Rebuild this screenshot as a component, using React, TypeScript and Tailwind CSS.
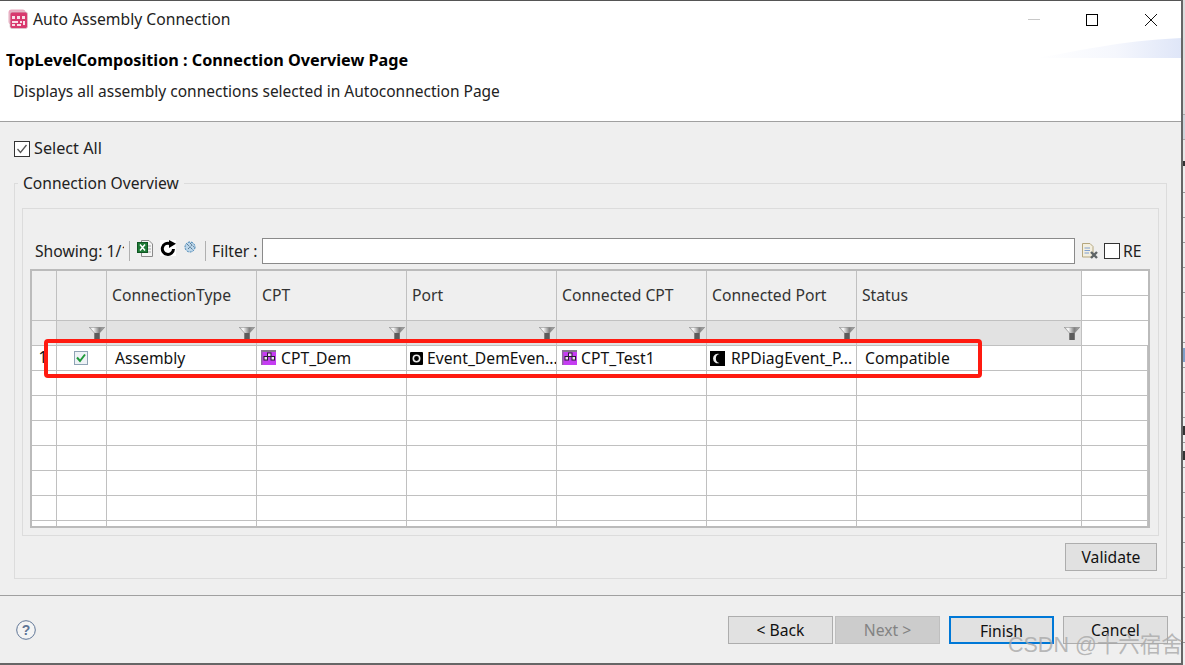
const columns = ["ConnectionType", "CPT", "Port", "Connected CPT", "Connected Port", "Status"];
const gridCols = "grid grid-cols-[25px_50px_150px_150px_150px_150px_150px_225px_1fr]";
const font = { fontFamily: "'Noto Sans', sans-serif" };

function Funnel() {
  return (
    <svg width="16" height="13" viewBox="0 0 16 13" className="absolute right-[1px] bottom-[5px]">
      <defs>
        <linearGradient id="fn" x1="0" x2="1" y1="0" y2="0">
          <stop offset="0" stopColor="#d0d0d0" />
          <stop offset="0.25" stopColor="#fafafa" />
          <stop offset="0.65" stopColor="#808080" />
          <stop offset="1" stopColor="#b0b0b0" />
        </linearGradient>
      </defs>
      <path d="M0.3 0.3H15.7L10.5 6V12.7H5.5V6Z" fill="url(#fn)" stroke="#7a7a7a" strokeWidth="0.6" />
      <path d="M5.5 6H10.5V13H5.5Z" fill="#5c5c5c" />
    </svg>
  );
}

function CptIcon() {
  return (
    <svg width="15" height="15" viewBox="0 0 15 15" className="shrink-0 -mt-[1px]">
      <rect width="15" height="15" fill="#c53df2" />
      <path d="M0 0H15V2H0Z" fill="#86788d" />
      <path d="M0 0H1.5V15H0Z" fill="#8f6aa0" />
      <rect x="6.5" y="3" width="3.5" height="3.5" fill="#f0e0f5" stroke="#2b1a33" strokeWidth="1" />
      <rect x="3" y="6.5" width="3.5" height="3.5" fill="#f0e0f5" stroke="#2b1a33" strokeWidth="1" />
      <rect x="10" y="6.5" width="3.5" height="3.5" fill="#f0e0f5" stroke="#2b1a33" strokeWidth="1" />
    </svg>
  );
}

function PortIcon() {
  return (
    <svg width="13" height="13" viewBox="0 0 13 13" className="shrink-0">
      <rect width="13" height="13" fill="#000" rx="1" />
      <circle cx="6.5" cy="6.5" r="3.2" fill="none" stroke="#e8e8e8" strokeWidth="1.6" />
    </svg>
  );
}

function MoonIcon() {
  return (
    <svg width="15" height="15" viewBox="0 0 15 15" className="shrink-0">
      <rect width="15" height="15" fill="#000" />
      <path d="M9.5 3A4.8 4.8 0 1 0 9.5 12A4.6 4.6 0 0 1 9.5 3Z" fill="#ececec" />
    </svg>
  );
}

function ChromeIcons() {
  return (
    <div className="flex items-center pr-[24px]">
      <div className="w-[12px] h-px bg-[#c8c8c8]" />
      <div className="ml-[46px] w-[12px] h-[12px] border border-black" />
      <svg width="12" height="12" viewBox="0 0 12 12" className="ml-[47px]">
        <path d="M0 0L12 12M12 0L0 12" stroke="#111" strokeWidth="1" />
      </svg>
    </div>
  );
}

function Cell({ className = "", children }: { className?: string; children?: React.ReactNode }) {
  return <div className={"border-r border-b border-[#c0c0c0] flex items-center min-w-0 overflow-hidden " + className}>{children}</div>;
}

function Label({ children }: { children: React.ReactNode }) {
  return <span className="pt-[2px] whitespace-nowrap">{children}</span>;
}

function DataRow() {
  return (
    <div className={gridCols + " h-[25px] bg-white text-[15.7px] text-[#111]"}>
      <Cell className="justify-center"><span className="-ml-[2px]">1</span></Cell>
      <Cell className="justify-center">
        <svg width="14" height="14" viewBox="0 0 14 14" className="-mt-[1px] -ml-[1px]">
          <rect x="0.5" y="0.5" width="13" height="13" fill="#eef2f6" stroke="#8fa3b5" />
          <path d="M3 6.5L6 10L11 3.5" fill="none" stroke="#1f9a3a" strokeWidth="2" />
        </svg>
      </Cell>
      <Cell className="pl-[8px]"><Label>Assembly</Label></Cell>
      <Cell className="pl-[4px] gap-[5px]"><CptIcon /><Label>CPT_Dem</Label></Cell>
      <Cell className="pl-[3px] gap-[4px]"><PortIcon /><Label>Event_DemEven...</Label></Cell>
      <Cell className="pl-[5px] gap-[4px]"><CptIcon /><Label>CPT_Test1</Label></Cell>
      <Cell className="pl-[3px] gap-[6px]"><MoonIcon /><Label>RPDiagEvent_P...</Label></Cell>
      <Cell className="pl-[8px]"><Label>Compatible</Label></Cell>
      <Cell />
    </div>
  );
}

function EmptyRow() {
  return (
    <div className={gridCols + " h-[25px] bg-white"}>
      {Array.from({ length: 9 }).map((_, i) => (
        <Cell key={i} />
      ))}
    </div>
  );
}

function DialogButton({ label, className = "border border-[#adadad] bg-[#e1e1e1] text-[#111] w-[105px]" }: { label: string; className?: string }) {
  return <button className={"h-[28px] pt-[2px] text-[15.7px] " + className}>{label}</button>;
}

function BehindStrip() {
  return (
    <div className="w-[4px] h-full bg-[#d8d8d8] border-l-2 border-l-[#666] flex flex-col overflow-hidden">
      <div className="h-[115px] shrink-0 bg-[#dcdcdc] border-b border-[#aaa]" />
      <div className="h-[25px] shrink-0 bg-[#cfd4da] border-b border-[#aaa]" />
      <div className="h-[28px] shrink-0 bg-[#e8e8e8] flex items-end pb-[2px]"><div className="w-full h-[5px] bg-[#333]" /></div>
      {Array.from({ length: 20 }).map((_, i) => (
        <div key={i} className="h-[25px] shrink-0 bg-[#efefef] border-b border-[#999] flex items-center">
          {i === 7 && <div className="w-full h-[14px] bg-[#7f9fc8]" />}
          {(i === 10 || i === 11) && <div className="w-full h-[9px] bg-[#333]" />}
        </div>
      ))}
    </div>
  );
}

export default function App() {
  return (
    <div className="relative w-[1185px] h-[665px] overflow-hidden bg-[#efefef] text-[#111] flex" style={font}>
      <div className="w-[1181px] h-full flex flex-col">
        {/* Header */}
        <div className="h-[122px] bg-white border-t border-t-[#555] border-b border-b-[#a0a0a0] relative shrink-0">
          <div className="flex items-center justify-between h-[37px]">
            <div className="flex items-center gap-[5px] pl-[8px] text-[15.7px] text-[#222]">
              <svg width="20" height="20" viewBox="0 0 20 20">
                <rect x="0.5" y="0.5" width="17" height="15" rx="3" fill="#e9a9bf" />
                <rect x="2" y="3" width="17.5" height="16.5" rx="2" fill="#d8396e" stroke="#d9c9ce" strokeWidth="0.8" />
                <path d="M4 7h3v3H4zM9 7h3v3H9zM14 7h3v3h-3zM4 12h6v2H4zM12 12h2v2h-2zM15 12h2v4h-2zM4 15h3v2H4zM9 15h4v2H9z" fill="#f9dfe8" />
              </svg>
              <span>Auto Assembly Connection</span>
            </div>
            <ChromeIcons />
          </div>
          <svg width="145" height="20" viewBox="0 0 145 20" className="absolute right-0 top-[37px]">
            <defs>
              <linearGradient id="wave" x1="0" x2="1" y1="0" y2="0">
                <stop offset="0" stopColor="#ffffff" />
                <stop offset="0.55" stopColor="#f5f7fd" />
                <stop offset="1" stopColor="#dfe6f8" />
              </linearGradient>
            </defs>
            <path d="M0 20C40 14 80 3 145 0V20Z" fill="url(#wave)" />
          </svg>
          <div className="pl-[6px] pt-[11px] text-[16.2px] leading-[22px] font-bold text-black">
            TopLevelComposition : Connection Overview Page
          </div>
          <div className="pl-[13px] pt-[10px] text-[15.5px] leading-[20px] text-[#222]">
            Displays all assembly connections selected in Autoconnection Page
          </div>
        </div>

        {/* Body */}
        <div className="flex-1 px-[14px] flex flex-col">
          <div className="flex items-center gap-[4px] pt-[9px] h-[44px] text-[16.2px] text-[#222]">
            <div className="w-[16px] h-[16px] border border-[#333] bg-white flex items-center justify-center">
              <svg width="12" height="12" viewBox="0 0 12 12">
                <path d="M1.5 6L4.5 9.5L10.5 2" fill="none" stroke="#555" strokeWidth="1.3" />
              </svg>
            </div>
            <span>Select All</span>
          </div>

          {/* Group box */}
          <div className="relative mt-[17px] w-[1153px] h-[396px] border border-[#dcdcdc] px-[7px] pt-[24px]">
            <span className="absolute left-[3px] -top-[11px] px-[5px] bg-[#efefef] text-[15.6px] leading-[20px] text-[#222]">
              Connection Overview
            </span>
            <div className="w-[1137px] h-[328px] border border-[#dcdcdc] px-[7px] pt-[28px]">
              {/* Toolbar */}
              <div className="flex items-center h-[28px] text-[15.7px] text-[#222]">
                <span className="pl-[5px] pt-[2px] w-[94px] whitespace-nowrap overflow-hidden">Showing: 1/1</span>
                <div className="ml-[5px] w-px h-[20px] bg-[#b0b0b0]" />
                <svg width="16" height="17" viewBox="0 0 16 17" className="ml-[7px] -mt-[6px]">
                  <path d="M4.5 0.5H12L15.5 4V16.5H4.5Z" fill="#f4f4f4" stroke="#8a8a8a" />
                  <path d="M11 6H14M11 9H14M11 12H14" stroke="#a9a9a9" />
                  <rect x="0.5" y="2.5" width="10" height="10" fill="#1e7a36" stroke="#0f5522" />
                  <path d="M3 4.5L8 10.5M8 4.5L3 10.5" stroke="#fff" strokeWidth="1.5" />
                </svg>
                <svg width="16" height="16" viewBox="0 0 16 16" className="ml-[7px] -mt-[6px] bg-white">
                  <path d="M13.5 9A5.6 5.6 0 1 1 10 3.6" fill="none" stroke="#000" strokeWidth="3" />
                  <path d="M9 0L16 3.8L9 8Z" fill="#000" />
                </svg>
                <svg width="12" height="12" viewBox="0 0 12 12" className="ml-[8px] -mt-[8px]">
                  <circle cx="6" cy="6" r="5" fill="#bcd6ea" stroke="#3f80b0" strokeDasharray="2 1" />
                  <path d="M3 3L9 9M4 8L8 4M6 2L10 6" stroke="#33556f" strokeWidth="1" strokeDasharray="1 1" />
                </svg>
                <div className="ml-[9px] w-px h-[20px] bg-[#b0b0b0]" />
                <span className="ml-[6px] pt-[2px] w-[46px] whitespace-nowrap">Filter :</span>
                <div className="ml-[4px] w-[813px] h-[26px] border border-[#8a8a8a] bg-white" />
                <svg width="16" height="16" viewBox="0 0 16 16" className="ml-[7px]">
                  <path d="M0.5 0.5H8L11 3.5V14H0.5Z" fill="#f3efe0" stroke="#b5a77e" />
                  <path d="M2.5 5H8M2.5 7.5H8M2.5 10H7" stroke="#7f9fd0" strokeWidth="1" />
                  <path d="M9 9L15 15M15 9L9 15" stroke="#5f6466" strokeWidth="2.4" />
                </svg>
                <div className="ml-[6px] w-[16px] h-[16px] border border-[#333] bg-white" />
                <span className="ml-[3px] pt-[2px]">RE</span>
              </div>

              {/* Table */}
              <div className="mt-[4px] w-[1120px] h-[259px] border-2 border-[#bbbbbb] overflow-hidden bg-white">
                <div className={gridCols + " h-[50px] bg-[#efefef] text-[15.7px] text-[#333]"}>
                  <Cell />
                  <Cell />
                  {columns.map((c) => (
                    <Cell key={c} className="pl-[5px]"><span className="whitespace-nowrap">{c}</span></Cell>
                  ))}
                  <div className="flex flex-col bg-white">
                    <div className="h-[25px] border-b border-[#c0c0c0]" />
                    <div className="h-[25px] border-b border-[#c0c0c0]" />
                  </div>
                </div>
                <div className={gridCols + " h-[25px] bg-[#e2e2e2]"}>
                  <Cell className="bg-[#efefef]" />
                  {Array.from({ length: 7 }).map((_, i) => (
                    <Cell key={i} className="relative"><Funnel /></Cell>
                  ))}
                  <div className="bg-white border-b border-[#c0c0c0]" />
                </div>
                <DataRow />
                {Array.from({ length: 7 }).map((_, i) => (
                  <EmptyRow key={i} />
                ))}
              </div>
            </div>
            <div className="flex justify-end mt-[7px] pr-[2px]">
              <DialogButton label="Validate" className="border border-[#adadad] bg-[#e1e1e1] text-[#111] w-[92px]" />
            </div>
          </div>
        </div>

        {/* Footer */}
        <div className="h-[70px] border-t border-t-[#a0a0a0] border-b-2 border-b-[#666] shrink-0 flex items-center pl-[16px] pr-[13px]">
          <svg width="20" height="20" viewBox="0 0 20 20" className="shrink-0">
            <circle cx="10" cy="10" r="9.3" fill="#f4f4f4" stroke="#5f7596" strokeWidth="1" />
            <text x="10" y="15" textAnchor="middle" fontSize="14" fontWeight="700" fill="#5f7596" fontFamily="Liberation Sans, sans-serif">?</text>
          </svg>
          <div className="ml-auto flex items-center gap-[2px]">
            <DialogButton label="< Back" />
            <DialogButton label="Next >" className="border border-[#bfbfbf] bg-[#cccccc] text-[#838383] w-[105px]" />
            <DialogButton label="Finish" className="ml-[7px] border-2 border-[#0078d7] bg-[#e1e1e1] text-[#111] w-[105px]" />
            <DialogButton label="Cancel" className="ml-[7px] border border-[#adadad] bg-[#e1e1e1] text-[#111] w-[105px]" />
          </div>
        </div>
      </div>

      <BehindStrip />

      {/* Red annotation */}
      <div className="absolute left-[44px] top-[339px] w-[938px] h-[39px] border-4 border-[#ff1a10] rounded-[4px]" />

      {/* Watermark */}
      <div className="absolute left-[1008px] top-[633px] text-[21.5px] leading-[24px] text-[#a8a8a8]/80 whitespace-nowrap" style={{ fontFamily: "'Liberation Sans', 'Noto Sans CJK SC', sans-serif" }}>
        CSDN @十六宿舍
      </div>
    </div>
  );
}
